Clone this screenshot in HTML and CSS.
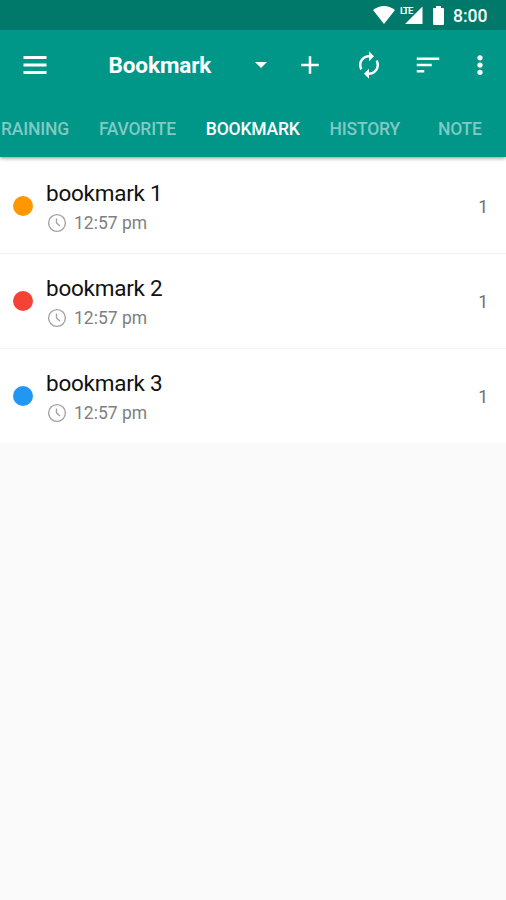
FILE: index.html
```html
<!DOCTYPE html>
<html lang="en">
<head>
  <meta charset="UTF-8">
  <meta name="viewport" content="width=device-width, initial-scale=1.0">
  <title>Bookmark</title>
  <link rel="stylesheet" href="styles.css">
</head>
<body>
  <header>
    <div class="status-bar">
      <svg class="wifi" width="22" height="18" viewBox="0 0 22 18"><path d="M11 18L0 4Q11-4 22 4Z"/></svg>
      <div class="signal">
        <span class="lte">LTE</span>
        <svg width="18" height="18" viewBox="0 0 18 18"><path d="M0 18H17.5V0.5Z"/></svg>
      </div>
      <svg class="battery" width="11" height="19" viewBox="0 0 11 19"><path d="M3 0H8V2H10Q11 2 11 3V18Q11 19 10 19H1Q0 19 0 18V3Q0 2 1 2H3Z"/></svg>
      <span class="clock">8:00</span>
    </div>

    <div class="toolbar">
      <button class="icon-btn menu" aria-label="Menu">
        <svg width="30" height="30" viewBox="0 0 30 30"><path d="M3.5 6H26.5V9H3.5ZM3.5 13.5H26.5V16.5H3.5ZM3.5 21H26.5V24H3.5Z"/></svg>
      </button>
      <h1>Bookmark</h1>
      <svg class="arrow" width="12" height="6" viewBox="0 0 12 6"><path d="M0 0H12L6 6Z"/></svg>
      <button class="icon-btn add" aria-label="Add">
        <svg width="30" height="30" viewBox="0 0 24 24"><path d="M19 13h-6v6h-2v-6H5v-2h6V5h2v6h6v2z"/></svg>
      </button>
      <button class="icon-btn sync" aria-label="Sync">
        <svg width="30" height="30" viewBox="0 0 24 24"><path d="M12 6v3l4-4-4-4v3c-4.42 0-8 3.58-8 8 0 1.57.46 3.03 1.24 4.26L6.7 14.8c-.45-.83-.7-1.79-.7-2.8 0-3.31 2.69-6 6-6zm6.76 1.74L17.3 9.2c.44.84.7 1.79.7 2.8 0 3.31-2.69 6-6 6v-3l-4 4 4 4v-3c4.42 0 8-3.58 8-8 0-1.57-.46-3.03-1.24-4.26z"/></svg>
      </button>
      <button class="icon-btn sort" aria-label="Sort">
        <svg width="30" height="30" viewBox="0 0 24 24"><path d="M3 18h6v-2H3v2zM3 6v2h18V6H3zm0 7h12v-2H3v2z"/></svg>
      </button>
      <button class="icon-btn more" aria-label="More">
        <svg width="30" height="30" viewBox="0 0 24 24"><circle cx="12" cy="6.2" r="2.1"/><circle cx="12" cy="12" r="2.1"/><circle cx="12" cy="17.8" r="2.1"/></svg>
      </button>
    </div>

    <nav>
      <ul>
        <li>RAINING</li>
        <li>FAVORITE</li>
        <li class="active">BOOKMARK</li>
        <li>HISTORY</li>
        <li class="last">NOTE</li>
      </ul>
    </nav>
  </header>

  <ul class="list">
    <li class="item">
      <span class="dot orange"></span>
      <div class="info">
        <h2>bookmark 1</h2>
        <p>
          <svg width="20" height="20" viewBox="0 0 20 20"><circle cx="10" cy="10" r="8.4"/><path d="M9.5 5.5V10L13 13"/></svg>
          <span>12:57 pm</span>
        </p>
      </div>
      <span class="count">1</span>
    </li>
    <li class="item">
      <span class="dot red"></span>
      <div class="info">
        <h2>bookmark 2</h2>
        <p>
          <svg width="20" height="20" viewBox="0 0 20 20"><circle cx="10" cy="10" r="8.4"/><path d="M9.5 5.5V10L13 13"/></svg>
          <span>12:57 pm</span>
        </p>
      </div>
      <span class="count">1</span>
    </li>
    <li class="item">
      <span class="dot blue"></span>
      <div class="info">
        <h2>bookmark 3</h2>
        <p>
          <svg width="20" height="20" viewBox="0 0 20 20"><circle cx="10" cy="10" r="8.4"/><path d="M9.5 5.5V10L13 13"/></svg>
          <span>12:57 pm</span>
        </p>
      </div>
      <span class="count">1</span>
    </li>
  </ul>
</body>
</html>
```
FILE: styles.css
```css
* {
  box-sizing: border-box;
}
body {
  font-family: Roboto, sans-serif;
  margin: 0;
  min-height: 100vh;
  background-color: #fafafa;
  overflow-x: hidden;
}
ul {
  list-style-type: none;
  margin: 0;
  padding: 0;
}
h1, h2, p {
  margin: 0;
}
svg {
  display: block;
  flex: none;
}
header {
  position: relative;
  height: 157px;
  background-color: #009688;
  color: #fff;
  fill: #fff;
  box-shadow: 0 1px 4px rgba(0, 0, 0, 0.45);
}
.status-bar {
  height: 30px;
  background-color: #00796b;
  display: flex;
  align-items: center;
  justify-content: flex-end;
  padding-right: 18px;
}
.signal {
  position: relative;
  margin-left: 10px;
}
.lte {
  position: absolute;
  left: -5px;
  top: 0;
  font-size: 9.5px;
  line-height: 9px;
  font-weight: bold;
  letter-spacing: -1px;
}
.battery {
  margin-left: 10px;
}
.clock {
  width: 35px;
  margin-left: 9px;
  padding-top: 2px;
  font-size: 17.5px;
  font-weight: 500;
}
.toolbar {
  height: 69px;
  display: flex;
  align-items: center;
  padding-left: 19.5px;
}
.icon-btn {
  background: none;
  border: none;
  padding: 0;
  fill: #fff;
}
.toolbar h1 {
  width: 103px;
  margin-left: 59px;
  padding-top: 1px;
  font-size: 22.5px;
  font-weight: bold;
  letter-spacing: -0.1px;
}
.arrow {
  margin-left: 43.5px;
}
.add {
  margin-left: 28px;
}
.sync {
  margin-left: 29px;
}
.sort {
  margin-left: 29px;
}
.more {
  margin-left: 22px;
}
nav ul {
  display: flex;
  height: 58px;
  margin-left: 1px;
}
nav li {
  flex: none;
  margin-right: 30px;
  line-height: 60px;
  font-size: 17.5px;
  font-weight: 500;
  letter-spacing: -0.2px;
  color: #7fcac3;
}
nav .active {
  color: #fff;
}
nav .last {
  margin-left: 8px;
  margin-right: 0;
}
.item {
  height: 95px;
  display: flex;
  align-items: center;
  padding: 0 18px 0 13px;
  background-color: #fff;
  border-bottom: 1px solid #f2f2f2;
}
.item:first-child {
  height: 97px;
  padding-top: 2px;
}
.item:last-child {
  height: 94px;
  border-bottom: none;
}
.dot {
  width: 20px;
  height: 20px;
  border-radius: 50%;
}
.orange {
  background-color: #ff9800;
}
.red {
  background-color: #f44336;
}
.blue {
  background-color: #2196f3;
}
.info {
  flex: 1;
  margin-left: 13px;
  padding-top: 4px;
}
.info h2 {
  font-size: 22.5px;
  line-height: 30px;
  font-weight: normal;
  letter-spacing: -0.25px;
  color: #111;
}
.info p {
  display: flex;
  align-items: center;
  height: 30px;
  margin-left: 1px;
  color: #808080;
  font-size: 17.5px;
}
.info p svg {
  margin-right: 7px;
  fill: none;
  stroke: #a3a3a3;
  stroke-width: 1.4;
}
.count {
  padding-top: 1px;
  font-size: 17.5px;
  color: #707070;
}
```
